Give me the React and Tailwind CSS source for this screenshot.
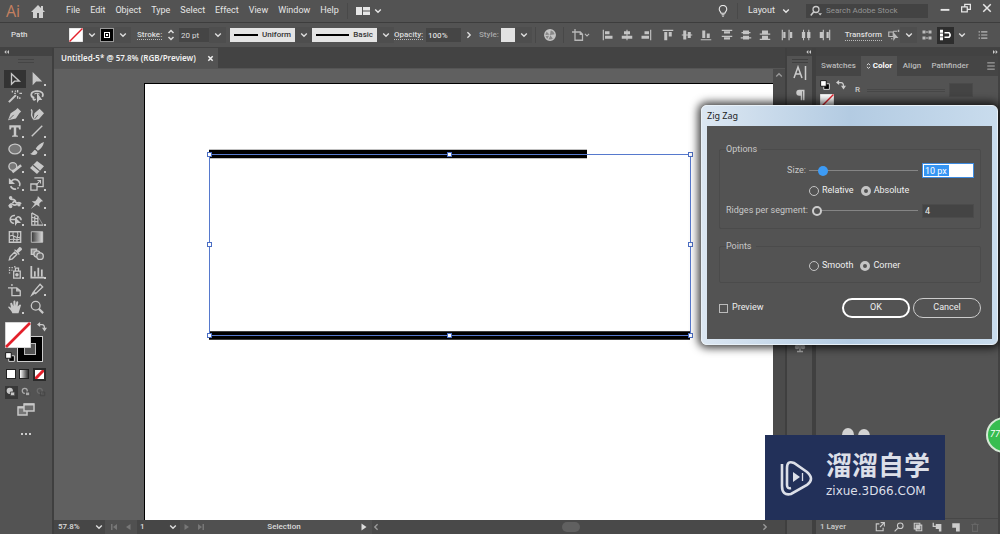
import React from "react";

const Svg = ({ children, className = "size-4", box = "0 0 16 16" }) => (
  <svg
    viewBox={box}
    className={`shrink-0 ${className}`}
    fill="none"
    stroke="currentColor"
    strokeWidth="1.5"
    aria-hidden="true"
  >
    {children}
  </svg>
);

const Chevron = ({ className = "size-2" }) => (
  <Svg box="0 0 8 8" className={className}>
    <path d="M1.2 2.4 4 5.2l2.8-2.8" strokeWidth="1.4" />
  </Svg>
);

const solid = { fill: "currentColor", stroke: "none" };

const tools = [
  ["Selection", <path d="M4 2v12l3.500-3.500H13z" />],
  ["Direct Selection", <path {...solid} d="M3 0v15l4-4.200h7z" />, 1],
  ["Magic Wand", <><path d="m1 15 8-8" strokeWidth="2.400" /><path d="M11 1v3M11 8v3M7 5h2M13 5h3M5 2v2M13.500 9.500v2M8 2l1 1" /></>],
  ["Lasso", <><path d="M5 10C0 9 0 3 7 2.500s9 3 7 6.500M4 10c-1 3 2 3 2 1" strokeWidth="2" /><path d="M5 6c2-2 5-1 6 0" strokeWidth="1.200" /><path {...solid} d="M8 4v12l2.500-3.500H14z" /></>],
  ["Pen", <><path {...solid} d="M0 15 3 7l6-4 4 4-4 6zM9 3l2-2 4 4-2 2z" /><path d="m1.500 14 5-5" stroke="#535353" strokeWidth="1" /></>, 1],
  ["Curvature", <><path {...solid} d="m4 15 1-8 6-5 5 5-6 7z" /><path d="M1 3c3 1 0 5 1 7s1 4 3 4" strokeWidth="1.600" /><path d="m5 14 4-5" stroke="#535353" strokeWidth="1" /></>],
  ["Type", <path {...solid} d="M1.500 1.500h13v4.700h-1.800L12 4H9.400v8.800l2 .5v1.200H4.600v-1.200l2-.5V4H4l-.7 2.200H1.500z" />, 1],
  ["Line Segment", <path d="M2 14 14 2" strokeWidth="1.600" />, 1],
  ["Ellipse", <ellipse cx="8" cy="8" rx="7" ry="5.500" fill="#777" />, 1],
  ["Paintbrush", <path {...solid} d="M16 0c-4 1-7 4-9.500 7.500L9 10c3.500-2 6-5 7-10zM6 9c-2.500 0-2 3-6 4.500 4 2.500 8.500 1.500 8.500-2z" />, 1],
  ["Shaper", <><circle cx="5.500" cy="7.500" r="4.500" fill="#777" /><path d="m5 14 10-8" strokeWidth="3" /></>, 1],
  ["Eraser", <><path {...solid} d="m0 9 8-8 8 6-8 9z" /><path d="m3.500 6 7.500 6.500" stroke="#535353" strokeWidth="1.200" /></>, 1],
  ["Rotate", <><path d="M4 4.500a5.500 5.500 0 1 1-1 6" strokeDasharray="15 1.500 2 1.500" strokeWidth="1.800" /><path {...solid} d="M1 1v7h7z" /></>, 1],
  ["Scale", <><path d="M1 8h7v7H1zM5 1h10v10H8" /><path d="m6.500 9.500 5-5M8.500 4h3.500v3.500" strokeWidth="1.200" /></>, 1],
  ["Width", <><path d="M2 3c2 5 4-1 6 4s4-1 7 3M1 13c3-7 5 2 10-3M5 9l4-3" strokeWidth="2" /><circle cx="12.500" cy="11" r="2" {...solid} /><circle cx="3" cy="13" r="2" {...solid} /><circle cx="3" cy="3" r="2" {...solid} /></>, 1],
  ["Puppet Warp", <path {...solid} d="m9 1 6 6-2.200.5-2.300 2.500.5 3.500L7.500 11 1 16l4.500-6L2 7l4 .2L8.500 4z" />, 1],
  ["Shape Builder", <><path d="M8 4a5 4.500 0 1 0-1 9M3 8.500h6c1-5 6-3 6 1" strokeWidth="1.700" /><path {...solid} d="M8 6v10l2.500-3.500H15z" /></>, 1],
  ["Perspective Grid", <><path d="M2 1v14h13M2 1l7 4v10M2 6l7 2M2 10.500l7 .5M5.500 3v12" strokeWidth="1.400" /><path d="m9 5 6 10" strokeWidth="1" opacity="0.6" /></>, 1],
  ["Mesh", <><path d="M1.500 2h13v12h-13z" /><path d="M2 7c5-3 6 4 12 1M6 2.500c-2 5 3 6 0 11M10.500 2.500c3 4-2 6 0 11M2 11c5-2 7 2 12-1" strokeWidth="1.200" /></>],
  ["Gradient", <><defs><linearGradient id="tg"><stop stopColor="#333" /><stop offset="1" stopColor="#ddd" /></linearGradient></defs><path d="M1.500 2h13v12h-13z" fill="url(#tg)" strokeWidth="1" /></>],
  ["Eyedropper", <><path d="m1.500 14.500 1-3.500 5-5 2.500 2.500-5 5z" /><path {...solid} d="m7 3.500 5.500 5.500 1-1L12 6.500 16 3c0-2-1-3-3-3L9.500 4 8 2.500z" /></>, 1],
  ["Blend", <><path d="M1.500 2.500h6v6h-6z" fill="#999" /><circle cx="8" cy="8" r="3.500" fill="#777" /><circle cx="11.500" cy="10.500" r="3.700" fill="#666" /></>],
  ["Symbol Sprayer", <><path d="M6.500 7H14v8H6.500zM8.500 7V3.500h3.500V7" /><circle cx="10.200" cy="11" r="2" {...solid} /><path d="M1 3h1.500M4 3h1.500M1 6h1.500M4 6h1M1 9h1.500M7 2h1.500" /></>, 1],
  ["Column Graph", <path d="M1.500 1v13.500H16M5.500 13V7M9.500 13V3M13.500 13V5" strokeWidth="2" />, 1],
  ["Artboard", <path d="M4.500 1v2.500M0 5.500h10l4 3.500v5.500H4.500v-9M10 5.500V9h4" />],
  ["Slice", <><path {...solid} d="m0 16 6-4-2.500-2.500z" /><path d="m4.500 9.500 7-8 3 3-8 7.500z" /></>, 1],
  ["Hand", <path {...solid} d="M5 15C4 12 2 11 0 8c1-1.500 2.500 0 3.500 1L2.500 4c1-1.500 2.500-.5 2.500.5L6.200 7V1.500c1-1.500 2.300-1 2.300.5v4.500l1-4.500c1-1.200 2.500-.5 2.200 1L11 7.500l2.500-2.500C15.500 5 15 6 14.500 7L12 15z" />, 1],
  ["Zoom", <><circle cx="6.500" cy="6.500" r="5" /><path d="m10 10 5 5" strokeWidth="2.500" /></>],
];

const alignGroups = [
  [
    ["Align left", "M1 1h1.500v14H1zM4 3h6v4H4zM4 9h10v4H4z"],
    ["Align horizontal centre", "M7.300 1h1.400v14H7.300zM4 3h8v4H4zM1 9h14v4H1z"],
    ["Align right", "M13.500 1H15v14h-1.500zM6 3h6v4H6zM2 9h10v4H2z"],
  ],
  [
    ["Align top", "M1 1h14v1.500H1zM3 4h4v11H3zM9 4h4v6H9z"],
    ["Align vertical centre", "M1 7.300h14v1.400H1zM3 2h4v12H3zM9 4h4v8H9z"],
    ["Align bottom", "M1 13.500h14V15H1zM3 2h4v10H3zM9 6h4v6H9z"],
  ],
  [
    ["Distribute top", "M1 1h14v1.500H1zM4 3h8v3H4zM1 9h14v1.500H1zM4 11h8v3H4z"],
    ["Distribute vertical centre", "M2 4h12v1.500H2zM4 2h8v5H4zM1 11h14v1.500H1zM4 9h8v5H4z"],
    ["Distribute bottom", "M1 6h14v1.500H1zM4 2h8v4H4zM1 13h14v1.500H1zM4 9h8v4H4z"],
  ],
  [
    ["Distribute left", "M1 1h1.500v14H1zM3 4h3v8H3zM10 1h1.500v14H10zM12 4h3v8h-3z"],
    ["Distribute horizontal centre", "M4 1h1.400v14H4zM2.500 4h4.400v8H2.500zM11 1h1.400v14H11zM9.500 4h4.400v8H9.500z"],
    ["Distribute right", "M5 1h1.500v14H5zM1 4h4v8H1zM13.500 1H15v14h-1.500zM10 4h3v8h-3z"],
  ],
];

function NoneSwatch({ className }) {
  return (
    <svg viewBox="0 0 26 26" className={`block ${className}`} aria-hidden="true">
      <path d="M0 0h26v26H0z" fill="#fff" stroke="#aaa" />
      <path d="M1 25 25 1" stroke="#e3202b" strokeWidth="2.600" />
    </svg>
  );
}

const SwapIcon = () => (
  <Svg className="size-2.5">
    <path d="M4 4h4q4 0 4 6" strokeWidth="2" />
    <path {...solid} d="M0 4 5 0v8zM12 15 8 9h8z" />
  </Svg>
);

const DefaultIcon = () => (
  <Svg className="size-2.5">
    <path d="M6 6h9v9H6z" fill="#000" stroke="#ddd" />
    <path d="M1 1h9v9H1z" fill="#fff" stroke="#111" />
  </Svg>
);

function MenuBar() {
  const menus = ["File", "Edit", "Object", "Type", "Select", "Effect", "View", "Window", "Help"];
  return (
    <header className="flex h-[23px] shrink-0 items-center border-b border-[#3d3d3d] text-[9px] text-[#e6e6e6]">
      <div className="w-[30px] pl-1.5 font-['Open_Sans',sans-serif] text-[16px] leading-5 text-[#c48060]">Ai</div>
      <button aria-label="Home" className="mr-4 text-[#d0d0d0]">
        <Svg className="size-4"><path {...solid} d="M8 2 1 9h2v6h4v-5h2v5h4V9h2l-2-2V3h-2v2z" /></Svg>
      </button>
      <nav className="flex gap-2.5 pl-1">
        {menus.map((m) => <button key={m}>{m}</button>)}
      </nav>
      <span className="mx-2 h-4 border-l border-[#494949]" />
      <button aria-label="Arrange documents" className="flex items-center gap-1">
        <Svg className="h-3 w-[14px]" box="0 0 14 12"><path {...solid} d="M0 2h6v8H0zM7 2h7v3.500H7zM7 6.500h7V10H7z" /></Svg>
        <Chevron />
      </button>
      <div className="ml-auto flex items-center">
        <button aria-label="Learn">
          <Svg className="size-3"><path d="M5.500 11C5 9 3 8 3 5.500a5 5 0 0 1 10 0C13 8 11 9 10.500 11zM6 13h4M7 15h2" strokeWidth="1.500" /></Svg>
        </button>
        <span className="mr-2.5 ml-2 h-4 border-l border-[#494949]" />
        <label className="flex items-center">
          <select aria-label="Workspace" className="w-[34px] appearance-none bg-transparent"><option>Layout</option></select>
          <Chevron />
        </label>
        <label className="ml-4 flex h-[14px] w-[122px] items-center gap-1 bg-[#434343] pl-1">
          <Svg className="size-3 text-[#ccc]"><circle cx="8" cy="6" r="4" strokeWidth="1.700" /><path d="m5 9-4 5" strokeWidth="2" /><path {...solid} d="M11 11h5l-2.500 3z" /></Svg>
          <input aria-label="Search Adobe Stock" placeholder="Search Adobe Stock" className="w-full min-w-0 bg-transparent text-[8px] placeholder:text-[#949494]" />
        </label>
        <div className="flex items-center gap-[11px] pr-2 pb-1.5 pl-3">
          <button aria-label="Minimize"><Svg className="size-2.5"><path d="M1 11h14" strokeWidth="3" /></Svg></button>
          <button aria-label="Restore"><Svg className="size-2.5"><path d="M6 5V2h9v8h-4M1 6h9v8H1z" strokeWidth="2" /></Svg></button>
          <button aria-label="Close"><Svg className="size-2.5"><path d="m2 2 12 12M14 2 2 14" strokeWidth="2.400" /></Svg></button>
        </div>
      </div>
    </header>
  );
}

const DropButton = ({ label }) => (
  <button aria-label={label} className="grid h-4 w-[17px] shrink-0 place-items-center bg-[#4e4e4e]"><Chevron /></button>
);

const LineSelect = ({ name, label }) => (
  <div className="flex shrink-0 items-center">
    <button aria-label={label} className="flex h-[14px] w-[65px] items-center justify-between bg-[#e4e4e4] px-1 text-[#333]">
      <span className="mr-1 h-0.5 flex-1 bg-black" />{name}
    </button>
    <DropButton label={`${label} list`} />
  </div>
);

function ControlBar() {
  return (
    <div className="flex h-[25px] shrink-0 items-center border-b border-[#434343] pl-[11px] text-[8px] font-medium text-[#ddd]">
      <span className="w-[58px] shrink-0">Path</span>
      <button aria-label="Fill"><NoneSwatch className="size-[14px]" /></button>
      <DropButton label="Fill colours" />
      <button aria-label="Stroke colour" className="grid size-[14px] shrink-0 place-items-center border border-[#999] bg-black">
        <span className="grid size-[6px] place-items-center border border-white"><span className="size-0.5 bg-white" /></span>
      </button>
      <DropButton label="Stroke colours" />
      <label htmlFor="stroke" className="ml-1.5 w-[30px] shrink-0"><span className="border-b border-dotted border-[#bbb]">Stroke:</span></label>
      <button aria-label="Step stroke" className="mr-1">
        <Svg box="0 0 8 14" className="h-[14px] w-2"><path d="M1.500 5 4 2.500 6.500 5M1.500 9 4 11.500 6.500 9" /></Svg>
      </button>
      <input id="stroke" defaultValue="20 pt" className="h-[14px] w-[30px] shrink-0 bg-[#454545] px-0.5 font-normal" />
      <DropButton label="Stroke weights" />
      <span className="w-1 shrink-0" />
      <LineSelect name="Uniform" label="Width profile" />
      <LineSelect name="Basic" label="Brush" />
      <label htmlFor="opacity" className="w-8 shrink-0"><span className="border-b border-dotted border-[#bbb]">Opacity:</span></label>
      <input id="opacity" defaultValue="100%" className="h-[14px] w-[35px] shrink-0 bg-[#454545] px-0.5" />
      <button aria-label="Opacity slider" className="grid w-4 shrink-0 -rotate-90 place-items-center"><Chevron /></button>
      <span className="w-[24px] shrink-0 pl-0.5 text-[#aaa]">Style:</span>
      <button aria-label="Graphic style" className="size-[14px] shrink-0 bg-[#e2e2e2]" />
      <DropButton label="Graphic styles" />
      <span className="mr-1 h-4 w-1 shrink-0 border-r border-[#484848]" />
      <button aria-label="Recolour artwork" className="ml-1 text-[#c4c4c4]">
        <Svg className="size-3"><circle cx="8" cy="8" r="7" fill="#888" strokeWidth="1.800" /><path {...solid} d="M8 8 3 3a7 7 0 0 1 6-2zM8 8l7-1a7 7 0 0 1-3 6z" /><path d="M8 8 5 14M8 8 1 9" /></Svg>
      </button>
      <span className="mr-2 h-4 w-2 shrink-0 border-r border-[#484848]" />
      <button aria-label="Document setup" className="flex items-center text-[#b8b8b8]">
        <Svg className="size-3"><path d="M4 0v15h10V7l-3-3H0M11 4v3h3" strokeWidth="1.700" /></Svg>
        <Chevron className="size-1.5" />
      </button>
      <div className="flex flex-1 items-center justify-between pr-1 pl-3 text-[#c4c4c4]">
        {alignGroups.map((g, i) => (
          <div key={i} className="flex gap-[7px]">
            {g.map(([n, d]) => (
              <button key={n} aria-label={n}><Svg className="size-3"><path {...solid} d={d} /></Svg></button>
            ))}
          </div>
        ))}
      </div>
      <div className="flex shrink-0 items-center pr-3 pl-2.5">
        <button className="border-b border-dotted border-[#bbb] leading-[10px]">Transform</button>
        <button aria-label="Isolate" className="ml-1.5 text-[#bbb]"><Svg className="size-3"><path d="M1 4h6v6H1zM7 3h5M4 13h2" /><path {...solid} d="M7 4v12l3-4h4zM13 1h2v3h-2z" /></Svg></button>
        <DropButton label="Isolate options" />
        <button aria-label="Snap grid" className="ml-1 text-[#bbb]"><Svg className="size-3"><path {...solid} d="M2 2h4v4H2zM10 2h4v4h-4zM2 10h4v4H2zM10 10h4v4h-4zM7 3h2v2H7zM7 11h2v2H7z" /></Svg></button>
        <button aria-label="Snap to point" className="mx-1 grid h-[17px] w-[17px] place-items-center bg-[#2d2d2d] text-white"><Svg className="size-3"><path {...solid} d="M0 1h4v4H0zM0 6h4v4H0zM0 11h4v4H0z" /><path d="M6 5h6q3 3 0 6H6" strokeWidth="2.200" /></Svg></button>
        <Chevron />
        <button aria-label="Panel menu" className="ml-3 text-[#bbb]"><Svg className="size-2.5"><path d="M5 3h10M5 8h10M5 13h10M1 3h2M1 8h2M1 13h2" strokeWidth="1.800" /></Svg></button>
      </div>
    </div>
  );
}

const DoubleArrow = ({ flip }) => (
  <Svg box="0 0 8 6" className={flip ? "h-1 w-1.5 rotate-180" : "h-1 w-1.5"}><path {...solid} d="M0 3 3 0v6zM4 3l3-3v6z" /></Svg>
);

function Toolbar() {
  return (
    <aside className="flex w-[54px] shrink-0 flex-col border-r-2 border-[#3f3f3f] text-[#c8c8c8]">
      <div className="flex h-2 shrink-0 items-center bg-[#434343] pl-1"><DoubleArrow /></div>
      <span className="mx-auto mt-[3px] h-1 w-4 border-y border-[#454545]" />
      <div className="mx-1 mt-[7px] grid h-[246px] grid-cols-2 grid-rows-[repeat(14,minmax(0,1fr))]">
        {tools.map(([name, art, more], i) => (
          <button key={name} aria-label={name} className={`relative grid place-items-center ${i === 0 ? "bg-[#333]" : ""}`}>
            <Svg className="size-[14px]">{art}</Svg>
            {more ? <span className="absolute right-0.5 bottom-0.5 size-0.5 bg-[#ccc]" /> : null}
          </button>
        ))}
      </div>
      <div className="relative ml-[5px] mt-1.5 h-[40px] w-[42px]">
        <button aria-label="Stroke" className="absolute right-1 bottom-0 grid size-[26px] place-items-center border border-[#ccc] bg-black">
          <span className="size-3 border border-[#bbb] bg-[#535353]" />
        </button>
        <button aria-label="Fill" className="absolute top-0 left-0"><NoneSwatch className="size-[26px]" /></button>
        <button aria-label="Swap fill and stroke" className="absolute top-0 right-0"><SwapIcon /></button>
        <button aria-label="Default fill and stroke" className="absolute bottom-0 left-0"><DefaultIcon /></button>
      </div>
      <div className="mx-1 mt-1.5 flex h-3 items-center justify-around">
        <button aria-label="Colour" className="size-[10px] border border-[#222] bg-white" />
        <button aria-label="Gradient fill" className="size-[10px] border border-[#222] bg-linear-to-r from-white to-[#333]" />
        <button aria-label="None" className="border-2 border-[#2b2b2b]">
          <svg viewBox="0 0 9 9" className="block size-[9px]" aria-hidden="true"><path d="M0 0h9v9H0z" fill="#fff" /><path d="m0 9 9-9" stroke="#e3202b" strokeWidth="3" /></svg>
        </button>
      </div>
      <div className="mx-1 mt-1.5 flex h-3 items-center justify-around">
        {["Draw normal", "Draw behind", "Draw inside"].map((n, i) => (
          <button key={n} aria-label={n} className={`grid size-[13px] place-items-center ${i === 0 ? "bg-[#383838]" : i === 2 ? "text-[#6b6b6b]" : "text-[#aaa]"}`}>
            <Svg className="size-2.5"><circle cx="6" cy="6" r="4" fill={i === 0 ? "currentColor" : "none"} strokeWidth="2" /><path d="M7 8h7v6H7z" fill={i === 2 ? "none" : "currentColor"} stroke="#444" /></Svg>
          </button>
        ))}
      </div>
      <button aria-label="Screen mode" className="mx-auto mt-1">
        <Svg box="0 0 18 14" className="h-[14px] w-[18px]"><path d="M1 5h9v8H1z" fill="#777" /><path d="M7 2h10v7H7z" fill="#6b6b6b" /><path d="M7 2.500h10M1 5.500h6" strokeWidth="2" /></Svg>
      </button>
      <button aria-label="Edit toolbar" className="mx-auto mt-3 flex h-3 items-center gap-0.5">
        <i className="size-[2px] bg-[#ccc]" /><i className="size-[2px] bg-[#ccc]" /><i className="size-[2px] bg-[#ccc]" />
      </button>
    </aside>
  );
}

const handles = [[64, 71], [304, 71], [545, 71], [64, 161], [545, 161], [64, 252], [304, 252], [545, 252]];

function DocumentArea() {
  return (
    <main className="flex min-w-0 flex-1 flex-col bg-[#606060]">
      <div className="flex h-[21px] shrink-0 border-b border-[#555] bg-[#434343]">
        <div className="flex h-full w-[164px] items-center justify-between bg-[#535353] pr-1 pl-[7px] font-['Noto_Sans','Open_Sans',sans-serif] text-[8px] font-semibold text-[#f0f0f0]">
          Untitled-5* @ 57.8% (RGB/Preview)
          <button aria-label="Close document"><Svg className="size-[7px]"><path d="m3 3 10 10M13 3 3 13" strokeWidth="3.500" /></Svg></button>
        </div>
      </div>
      <div className="flex min-h-0 flex-1">
        <div className="flex min-w-0 flex-1 pt-[14px] pl-[90px]">
          <div className="min-w-0 flex-1 overflow-hidden border-t border-l border-black bg-white">
            <svg width="560" height="300" viewBox="0 0 560 300" className="block max-w-none" role="img" aria-label="Two stroked lines">
              <path d="M64 70H442M64 251.500H545" stroke="#000" strokeWidth="8.500" />
              <path d="M64.500 70.500h481v181h-481z" fill="none" stroke="#5679cd" />
              {handles.map(([x, y]) => (
                <rect key={`${x}-${y}`} x={x - 1.500} y={y - 2.500} width="4" height="4" fill="#fff" stroke="#4b6ec4" />
              ))}
            </svg>
          </div>
        </div>
        <div className="w-3 shrink-0 bg-[#4b4b4b] pt-0.5 text-[#999]"><Chevron className="mx-auto size-2 rotate-180" /></div>
      </div>
      <footer className="flex h-[14px] shrink-0 items-center bg-[#505050] text-[8px] font-medium text-[#ddd]">
        <label className="flex h-full w-[51px] items-center bg-[#464646] pl-1">
          <select aria-label="Zoom level" className="w-[37px] appearance-none bg-transparent"><option>57.8%</option></select>
          <Chevron />
        </label>
        <div className="flex w-[32px] justify-center gap-1.5 text-[#777]">
          <button aria-label="First artboard"><Svg className="size-2"><path {...solid} d="M2 2h3v12H2zM14 2v12L6 8z" /></Svg></button>
          <button aria-label="Previous artboard"><Svg className="size-2"><path {...solid} d="M13 2v12L4 8z" /></Svg></button>
        </div>
        <label className="flex h-full w-[43px] items-center bg-[#464646] pl-[3px]">
          <select aria-label="Artboard" className="w-[29px] appearance-none bg-transparent"><option>1</option></select>
          <Chevron />
        </label>
        <div className="flex w-[28px] justify-center gap-1.5 text-[#777]">
          <button aria-label="Next artboard"><Svg className="size-2"><path {...solid} d="M3 2v12l9-6z" /></Svg></button>
          <button aria-label="Last artboard"><Svg className="size-2"><path {...solid} d="M11 2h3v12h-3zM2 2v12l8-6z" /></Svg></button>
        </div>
        <span className="w-[152px] text-center">Selection</span>
        <button aria-label="Status options"><Svg className="size-2"><path {...solid} d="M3 1v14l10-7z" /></Svg></button>
        <div className="ml-1 flex h-full flex-1 items-center bg-[#494949] pr-4 text-[#999]">
          <Chevron className="size-2 rotate-90" />
          <span className="mx-auto h-2.5 w-[18px] rounded-full bg-[#606060]" />
          <Chevron className="size-2 -rotate-90" />
        </div>
      </footer>
    </main>
  );
}

function RightPanels() {
  return (
    <aside className="flex w-[215px] shrink-0 border-l-2 border-[#3f3f3f] text-[#ccc]">
      <div className="flex w-[29px] shrink-0 flex-col items-center border-r-4 border-[#404040]">
        <div className="flex h-2 w-full items-center justify-end bg-[#424242]"><DoubleArrow /></div>
        <span className="mt-[3px] h-1 w-4 border-y border-[#404040]" />
        <button aria-label="Character" className="mt-0.5"><Svg className="h-4 w-[14px]" box="0 0 14 16"><path d="m1 13 4-11 4 11M2.500 9h5M12.500 1v14" strokeWidth="1.500" /></Svg></button>
        <button aria-label="Paragraph" className="mt-2"><Svg className="size-3"><path {...solid} d="M7 1h7v14h-2V3h-1v12H9V9H7a4 4 0 0 1 0-8z" /></Svg></button>
        <button aria-label="Symbols" className="mt-[240px] text-[#aaa]"><Svg className="size-3"><circle cx="8" cy="4" r="3" {...solid} /><circle cx="4" cy="8" r="3" {...solid} /><circle cx="12" cy="8" r="3" {...solid} /><path d="M8 5v9M4 14h8" strokeWidth="2" /></Svg></button>
      </div>
      <div className="flex min-w-0 flex-1 flex-col border-r-2 border-[#424242]">
        <div className="flex h-2 shrink-0 items-center justify-end bg-[#424242]"><DoubleArrow flip /></div>
        <div className="flex h-5 shrink-0 items-center bg-[#454545] text-[8px] font-medium text-[#bbb]">
          <button className="h-full w-[45px]">Swatches</button>
          <button className="flex h-full w-9 items-center justify-center gap-0.5 bg-[#535353] font-bold text-white">
            <Svg box="0 0 6 10" className="h-2 w-[5px]"><path d="m1 4 2-2 2 2M1 6l2 2 2-2" strokeWidth="1" /></Svg>Color
          </button>
          <button className="h-full w-[30px]">Align</button>
          <button className="h-full w-[46px]">Pathfinder</button>
          <button aria-label="Panel menu" className="mr-0.5 ml-auto"><Svg className="size-2.5"><path d="M2 3h12M2 8h12M2 13h12" strokeWidth="1.500" /></Svg></button>
        </div>
        <div className="flex shrink-0 items-start pt-1 pl-1">
          <div className="w-[35px]">
            <div className="flex gap-1.5"><DefaultIcon /><SwapIcon /></div>
            <NoneSwatch className="mt-1 size-[14px]" />
          </div>
          <label className="flex h-5 flex-1 items-center text-[8px] font-medium">
            <span className="w-3">R</span>
            <span className="mr-1 h-[3px] w-[78px] border-y border-[#474747]" />
            <input aria-label="Red" className="h-[14px] w-6 border border-[#4a4a4a] bg-[#444]" />
          </label>
        </div>
        <svg viewBox="0 0 32 16" className="mt-auto mb-[75px] ml-[24px] h-4 w-8" aria-hidden="true">
          <ellipse cx="8" cy="8" rx="6" ry="7" fill="#d2d2d2" />
          <ellipse cx="24" cy="9" rx="6" ry="7" fill="#d2d2d2" />
        </svg>
        <div className="flex h-[16px] shrink-0 items-center justify-between border-t border-[#474747] pr-[18px] pl-1 text-[8px] font-medium">
          <span className="flex-1">1 Layer</span>
          <div className="flex gap-[9px]">
            {[
              ["Export", <path d="M7 3H2v11h11V9M9 1h6v6M15 1 8 8" />],
              ["Locate", <><circle cx="10" cy="6" r="4.500" /><path d="m6 10-5 5" /></>],
              ["Mask", <><path d="M2 2h9v9H2zM5 5h9v9H5z" /><path {...solid} d="M5 5h6v6H5z" /></>],
              ["New sublayer", <path {...solid} d="M1 1h2v5h3v2H1zM6 3h9v12h-4v-4H6z" />],
              ["New layer", <path {...solid} d="M2 2h12v13H8V9H2z" />],
              ["Delete", <path stroke="#666" d="M2 4h12M4 4v11h8V4M6 2h4" />],
            ].map(([n, art]) => (
              <button key={n} aria-label={n}><Svg className="size-2.5"><g strokeWidth="1.700">{art}</g></Svg></button>
            ))}
          </div>
        </div>
      </div>
    </aside>
  );
}

function Radio({ name, label, checked }) {
  return (
    <label className="flex items-center gap-[3px] text-[#f0f0f0]">
      <input
        type="radio"
        name={name}
        defaultChecked={checked}
        className="size-2.5 appearance-none rounded-full border border-[#c4c4c4] checked:border-[3px]"
      />
      {label}
    </label>
  );
}

const track = "h-2.5 appearance-none bg-[linear-gradient(#858585,#858585)] bg-[length:100%_1px] bg-center bg-no-repeat [&::-webkit-slider-thumb]:size-2.5 [&::-webkit-slider-thumb]:appearance-none [&::-webkit-slider-thumb]:rounded-full";

function ZigZagDialog() {
  return (
    <form
      role="dialog"
      aria-labelledby="dlg-title"
      onSubmit={(e) => e.preventDefault()}
      className="absolute top-[105px] right-0.5 w-[297px] rounded-md border border-[#e8f1f8] bg-linear-to-r from-[#dce7f2] via-[#b3cbe2] to-[#c9dced] px-[5px] pb-[5px] text-[9px] shadow-[0_0_8px_3px_rgba(0,0,0,0.75)]"
    >
      <h1 id="dlg-title" className="h-5 font-['Noto_Sans',sans-serif] text-[9px] leading-5 text-[#222]">Zig Zag</h1>
      <div className="bg-[#535353] pt-4 pr-[11px] pb-[21px] pl-3 text-[#c8c8c8]">
        <fieldset className="rounded-xs border border-[#4b4b4b] px-1.5 pb-2.5">
          <legend className="h-[14px] pr-1 leading-[14px]">Options</legend>
          <div className="flex flex-col gap-[5px] pt-[7px]">
            <div className="flex h-[15px] items-center">
              <label htmlFor="size" className="w-[80px] text-right">Size:</label>
              <input type="range" aria-label="Size slider" defaultValue="9" className={`${track} mr-1 ml-[3px] w-[109px] [&::-webkit-slider-thumb]:bg-[#3d9bf5]`} />
              <input id="size" defaultValue="10 px" className="h-[15px] w-[52px] border border-[#3d8be0] bg-white bg-[linear-gradient(#3595f3,#3595f3)] bg-[length:25px_11px] bg-[position:1px_1px] bg-no-repeat px-0.5 text-white" />
            </div>
            <div className="flex h-[15px] items-center gap-[7px] pl-[83px]">
              <Radio name="mode" label="Relative" />
              <Radio name="mode" label="Absolute" checked />
            </div>
            <div className="flex h-[15px] items-center">
              <label htmlFor="ridges" className="w-[80px] whitespace-nowrap text-right">Ridges per segment:</label>
              <input type="range" aria-label="Ridges slider" defaultValue="0" className={`${track} mr-1 ml-1.5 w-[106px] [&::-webkit-slider-thumb]:border-2 [&::-webkit-slider-thumb]:border-[#ccc] [&::-webkit-slider-thumb]:bg-[#535353]`} />
              <input id="ridges" defaultValue="4" className="h-[14px] w-[52px] border border-[#4b4b4b] bg-[#444] px-0.5 text-[#eee]" />
            </div>
          </div>
        </fieldset>
        <fieldset className="mt-2.5 rounded-xs border border-[#4b4b4b] px-1.5 pb-2">
          <legend className="h-[14px] pr-1 leading-[14px]">Points</legend>
          <div className="flex h-[21px] items-center gap-[7px] pt-1 pl-[83px]">
            <Radio name="points" label="Smooth" />
            <Radio name="points" label="Corner" checked />
          </div>
        </fieldset>
        <div className="mt-[15px] flex items-center text-[#eee]">
          <label className="flex flex-1 items-center gap-1">
            <input type="checkbox" className="size-[9px] appearance-none border border-[#bbb]" />Preview
          </label>
          <button type="submit" className="mr-[3px] h-5 w-[68px] rounded-full border-2 border-white">OK</button>
          <button type="button" className="h-5 w-[68px] rounded-full border border-[#ccc]">Cancel</button>
        </div>
      </div>
    </form>
  );
}

export default function App() {
  return (
    <div className="relative flex h-screen flex-col overflow-hidden bg-[#535353] font-['Roboto','Noto_Sans',sans-serif]">
      <MenuBar />
      <ControlBar />
      <div className="flex min-h-0 flex-1">
        <Toolbar />
        <DocumentArea />
        <RightPanels />
      </div>
      <ZigZagDialog />
      <div className="absolute top-[417px] -right-[22px] flex size-9 items-center rounded-full border-2 border-[#d5e8d5] bg-[#37bd50] pl-0.5 text-[9px] text-white italic">77</div>
      <div className="absolute right-[55px] bottom-[14px] flex h-[85px] w-[180px] items-center gap-3 bg-[#223059] pl-[15px] text-[#dcdfe8]">
        <svg viewBox="0 0 34 36" className="h-9 w-[34px] shrink-0" fill="none" stroke="currentColor" aria-hidden="true">
          <path d="M2 4v22q0 10 9 8l16-9q8-6 0-13L14 3Q7 0 7 8v17q0 4 4 3" strokeWidth="2.600" />
          <path d="m13 12 7 5-7 5z" fill="currentColor" stroke="none" />
          <path d="M22.500 13v8" strokeWidth="1.300" />
        </svg>
        <div className="flex flex-col gap-1 pb-3">
          <div lang="zh" className="font-['Noto_Sans_CJK_SC',sans-serif] text-[26px] leading-[34px] font-bold">溜溜自学</div>
          <div className="font-['DejaVu_Sans',sans-serif] text-[12px] leading-3">zixue.3D66.COM</div>
        </div>
      </div>
    </div>
  );
}
